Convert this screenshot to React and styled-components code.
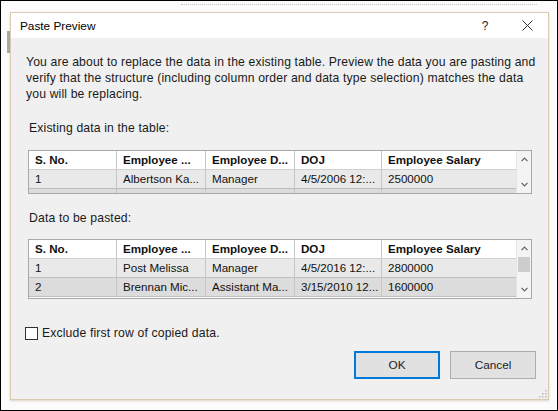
import React from 'react'
import styled, { createGlobalStyle } from 'styled-components'

const Global = createGlobalStyle`
  html, body { margin: 0; padding: 0; background: #fff; overflow: hidden; }
  * { box-sizing: border-box; }
`

const Screen = styled.div`
  width: 558px;
  height: 411px;
  border: 1px solid #000;
  background: #fbfbfb;
  padding: 11px 8px 0 9px;
  font-family: "Liberation Sans", Arial, sans-serif;
  position: relative;
`

const Ribbon = styled.div`
  position: absolute;
  top: 3px;
  left: 180px;
  right: 20px;
  height: 2px;
  border-top: 1px dotted #c8c8c8;
`

const SideGrip = styled.div`
  position: absolute;
  left: 6px;
  top: 30px;
  width: 3px;
  height: 22px;
  background: #a9a9a9;
`

const Dialog = styled.div`
  width: 539px;
  height: 388px;
  border: 1px solid #d8cdb0;
  box-shadow: 0 1px 2px rgba(160, 140, 90, 0.35);
  background: #f0f0f0;
  display: flex;
  flex-direction: column;
  position: relative;
`

const TitleBar = styled.div`
  height: 25px;
  background: #fff;
  display: flex;
  align-items: center;
  padding: 0 0 0 9px;
  font-size: 11.8px;
  color: #000;
`

const Title = styled.div`
  flex: 1;
`

const TitleButton = styled.div`
  width: 42px;
  display: flex;
  justify-content: center;
  font-size: 12px;
  color: #222;
`

const Body = styled.div`
  flex: 1;
  padding: 16px 12px 0 15px;
  color: #1a1a1a;
`

const Intro = styled.p`
  margin: 0;
  font-size: 12.2px;
  letter-spacing: 0.15px;
  line-height: 16px;
  white-space: nowrap;
`

const Label = styled.div`
  margin: ${p => p.$top}px 0 0 3px;
  font-size: 12.2px;
  letter-spacing: 0.15px;
  line-height: 16px;
`

const TableBox = styled.div`
  margin: ${p => p.$top}px 0 0 2px;
  width: 504px;
  height: ${p => p.$h}px;
  border: 1px solid #a8a8a8;
  background: #fff;
  display: flex;
  overflow: hidden;
`

const Grid = styled.div`
  flex: 1;
  display: grid;
  grid-template-columns: 88px 89px 89px 87px 1fr;
  grid-auto-rows: 19px;
  align-content: start;
`

const Cell = styled.div`
  padding: 0 6px;
  font-size: 11.6px;
  line-height: 18px;
  font-weight: ${p => (p.$head ? 700 : 400)};
  background: ${p => (p.$head ? '#fff' : p.$dark ? '#dcdcdc' : '#e9e9e9')};
  border-right: 1px solid #c6c6c6;
  border-bottom: 1px solid ${p => (p.$head ? '#d0d0d0' : '#bdbdbd')};
  white-space: nowrap;
  overflow: hidden;
  color: #111;
  &:nth-child(5n) { border-right: none; }
`

const Scroll = styled.div`
  width: 15px;
  border-left: 1px solid #e6e6e6;
  background: #f4f4f4;
  display: flex;
  flex-direction: column;
  align-items: center;
`

const Arrow = styled.div`
  height: ${p => p.$h}px;
  display: flex;
  align-items: center;
  justify-content: center;
  width: 100%;
`

const Track = styled.div`
  flex: 1;
  width: 100%;
  display: flex;
  justify-content: center;
`

const Thumb = styled.div`
  width: 12px;
  height: 15px;
  background: #cdcdcd;
`

const CheckRow = styled.label`
  margin: 27px 0 0 -1px;
  display: flex;
  align-items: center;
  gap: 4px;
  font-size: 12.2px;
  letter-spacing: 0.15px;
`

const Box = styled.span`
  width: 13px;
  height: 13px;
  border: 1px solid #333;
  background: #fff;
`

const Buttons = styled.div`
  margin: 11px 0 0 0;
  display: flex;
  justify-content: flex-end;
  gap: 10px;
`

const Button = styled.div`
  width: 86px;
  height: 28px;
  background: #e1e1e1;
  border: ${p => (p.$default ? '2px solid #0078d7' : '1px solid #adadad')};
  display: flex;
  align-items: center;
  justify-content: center;
  font-size: 11.8px;
  color: #222;
`

const Grip = styled.svg`
  position: absolute;
  right: 1px;
  bottom: 1px;
`

const Chevron = ({ up }) => (
  <svg width="7" height="5" viewBox="0 0 7 5">
    <path d={up ? 'M0.5 4.2 L3.5 1.2 L6.5 4.2' : 'M0.5 0.8 L3.5 3.8 L6.5 0.8'} fill="none" stroke="#606060" strokeWidth="1.2" />
  </svg>
)

const CloseIcon = () => (
  <svg width="11" height="11" viewBox="0 0 11 11">
    <path d="M0.5 0.5 L10.5 10.5 M10.5 0.5 L0.5 10.5" stroke="#333" strokeWidth="1" />
  </svg>
)

const headers = ['S. No.', 'Employee ...', 'Employee D...', 'DOJ', 'Employee Salary']

const DataTable = ({ rows, height, top, thumb }) => (
  <TableBox $h={height} $top={top}>
    <Grid>
      {headers.map(h => <Cell key={h} $head>{h}</Cell>)}
      {rows.map((r, i) =>
        r.map((c, j) => <Cell key={i + '-' + j} $dark={i === 1}>{c}</Cell>)
      )}
    </Grid>
    <Scroll>
      <Arrow $h={17}><Chevron up /></Arrow>
      <Track>{thumb && <Thumb />}</Track>
      <Arrow $h={17}><Chevron /></Arrow>
    </Scroll>
  </TableBox>
)

export default function App() {
  return (
    <>
      <Global />
      <Screen>
        <Ribbon />
        <SideGrip />
        <Dialog>
          <TitleBar>
            <Title>Paste Preview</Title>
            <TitleButton>?</TitleButton>
            <TitleButton><CloseIcon /></TitleButton>
          </TitleBar>
          <Body>
            <Intro>
              You are about to replace the data in the existing table. Preview the data you are pasting and<br />
              verify that the structure (including column order and data type selection) matches the data<br />
              you will be replacing.
            </Intro>
            <Label $top={18}>Existing data in the table:</Label>
            <DataTable
              top={14}
              height={44}
              rows={[
                ['1', 'Albertson Ka...', 'Manager', '4/5/2006 12:...', '2500000'],
                ['', '', '', '', '']
              ]}
            />
            <Label $top={16}>Data to be pasted:</Label>
            <DataTable
              top={13}
              height={60}
              thumb
              rows={[
                ['1', 'Post Melissa', 'Manager', '4/5/2016 12:...', '2800000'],
                ['2', 'Brennan Mic...', 'Assistant Ma...', '3/15/2010 12...', '1600000']
              ]}
            />
            <CheckRow>
              <Box />
              Exclude first row of copied data.
            </CheckRow>
            <Buttons>
              <Button $default>OK</Button>
              <Button>Cancel</Button>
            </Buttons>
          </Body>
          <Grip width="10" height="10" viewBox="0 0 10 10">
            {[[8, 2], [8, 5], [5, 5], [8, 8], [5, 8], [2, 8]].map(([x, y]) => (
              <rect key={x + '' + y} x={x} y={y} width="1.5" height="1.5" fill="#b8b8b8" />
            ))}
          </Grip>
        </Dialog>
      </Screen>
    </>
  )
}
